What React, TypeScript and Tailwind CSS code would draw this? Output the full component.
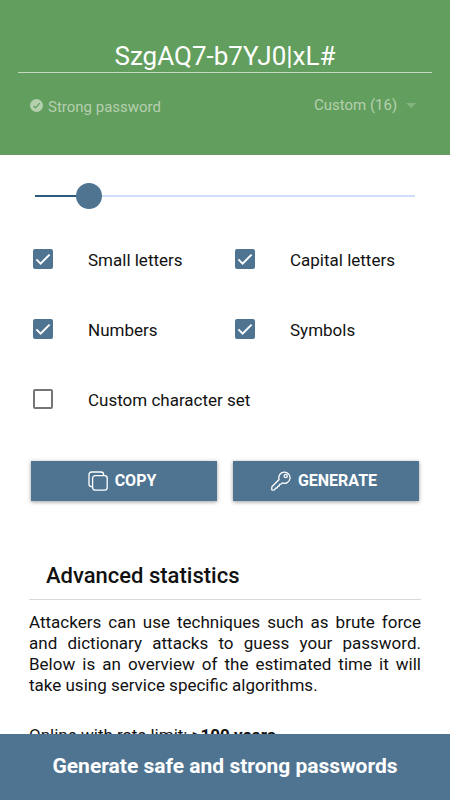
import { useState } from "react";

const MIN_LENGTH = 5;
const MAX_LENGTH = 100;

const charSets = [
  { id: "small", label: "Small letters", checked: true },
  { id: "capital", label: "Capital letters", checked: true },
  { id: "numbers", label: "Numbers", checked: true },
  { id: "symbols", label: "Symbols", checked: true },
  { id: "custom", label: "Custom character set", checked: false },
];

function StrongIcon() {
  return (
    <svg viewBox="0 0 24 24" className="h-[13px] w-[13px]" aria-hidden="true">
      <circle cx="12" cy="12" r="12" fill="#b5d0af" />
      <path d="M6.5 12.8l3.7 3.7 7.8-8.7" fill="none" stroke="#629e5d" strokeWidth="2.2" />
    </svg>
  );
}

function CopyIcon() {
  return (
    <svg
      viewBox="0 0 20 20"
      className="h-5 w-5"
      fill="none"
      stroke="currentColor"
      strokeWidth="1.3"
      strokeLinejoin="round"
      strokeLinecap="round"
      aria-hidden="true"
    >
      <rect x="4.6" y="4.6" width="14.6" height="14.6" rx="2.6" />
      <path d="M15.6 4.4V3.6A2.6 2.6 0 0 0 13 1H3.6A2.6 2.6 0 0 0 1 3.6V13a2.6 2.6 0 0 0 2.6 2.6h.8" />
    </svg>
  );
}

function KeyIcon() {
  return (
    <svg
      viewBox="0 0 20 20"
      className="h-5 w-5"
      fill="none"
      stroke="currentColor"
      strokeWidth="1.3"
      strokeLinejoin="round"
      strokeLinecap="round"
      aria-hidden="true"
    >
      <path d="M8.1 8.5A5.6 5.6 0 1 1 11.300 11.900L10 13.200l-1.500.2-.3 1.600-1.600.3-.3 1.500-1.400.2-1.500 1.800-2.200.3-.5-.5.200-2.900z" />
      <circle cx="14.700" cy="5" r="1.600" />
    </svg>
  );
}

export default function App() {
  const [length, setLength] = useState(16);
  const [sets, setSets] = useState(charSets);

  const percent = ((length - MIN_LENGTH) / (MAX_LENGTH - MIN_LENGTH)) * 100;

  const toggle = (id: string) => {
    setSets(sets.map((s) => (s.id === id ? { ...s, checked: !s.checked } : s)));
  };

  return (
    <div className="flex h-dvh flex-col bg-white font-[Roboto,sans-serif] text-[#111]">
      <main className="min-h-0 flex-1 overflow-y-auto [scrollbar-width:none]">
        <header className="bg-[#629e5d] px-[18px] pt-10 pb-[38px]">
          <input
            type="text"
            aria-label="Password"
            defaultValue="SzgAQ7-b7YJ0|xL#"
            className="block h-[33px] w-full border-b border-[#c3dac0] bg-transparent text-center text-[26px] text-white outline-none"
          />
          <div className="mt-5 flex h-6 items-center justify-between pr-4 pl-3 text-[15px] text-[#b5d0af]">
            <div className="flex items-center gap-[5px]">
              <StrongIcon />
              <span className="pt-1">Strong password</span>
            </div>
            <div className="flex items-center gap-2">
              <select
                aria-label="Password length preset"
                className="appearance-none bg-transparent outline-none"
              >
                <option>Custom (16)</option>
              </select>
              <svg viewBox="0 0 10 5" className="h-[5px] w-[10px]" aria-hidden="true">
                <path d="M0 0h10L5 5z" fill="#85b37f" />
              </svg>
            </div>
          </div>
        </header>

        <div className="px-[23px]">
          <div className="px-3 pt-7">
            <input
              type="range"
              aria-label="Password length"
              min={MIN_LENGTH}
              max={MAX_LENGTH}
              value={length}
              onChange={(e) => setLength(Number(e.target.value))}
              style={{
                backgroundImage: `linear-gradient(to right, #2b5a7d ${percent}%, #cddffa ${percent}%)`,
              }}
              className="block h-[26px] w-full appearance-none bg-[length:100%_2px] bg-center bg-no-repeat outline-none [&::-webkit-slider-thumb]:h-[26px] [&::-webkit-slider-thumb]:w-[26px] [&::-webkit-slider-thumb]:appearance-none [&::-webkit-slider-thumb]:rounded-full [&::-webkit-slider-thumb]:bg-[#4f7492]"
            />
          </div>

          <div className="mt-[15px] grid grid-cols-2">
            {sets.map((set) => (
              <label
                key={set.id}
                className="flex h-[70px] items-center gap-[35px] pl-[10px] text-[17px] whitespace-nowrap"
              >
                <span className="relative h-5 w-5">
                  <input
                    type="checkbox"
                    checked={set.checked}
                    onChange={() => toggle(set.id)}
                    className="peer block h-5 w-5 appearance-none rounded-xs border-2 border-[#757575] checked:border-[#4f7492] checked:bg-[#4f7492]"
                  />
                  <svg
                    viewBox="0 0 20 20"
                    className="pointer-events-none absolute inset-0 hidden h-5 w-5 peer-checked:block"
                    aria-hidden="true"
                  >
                    <path d="M3.400 10.400l4.200 4.200 9-9" fill="none" stroke="#fff" strokeWidth="2" />
                  </svg>
                </span>
                <span className="pt-[3px]">{set.label}</span>
              </label>
            ))}
          </div>

          <div className="mt-[27px] grid grid-cols-2 gap-4 px-2">
            <button className="flex h-10 items-center justify-center gap-[7px] bg-[#4f7492] pr-1 text-base font-bold text-white shadow-[0_1px_4px_rgba(0,0,0,0.4)]">
              <CopyIcon />
              COPY
            </button>
            <button className="flex h-10 items-center justify-center gap-[7px] bg-[#4f7492] pr-1 text-base font-bold text-white shadow-[0_1px_4px_rgba(0,0,0,0.4)]">
              <KeyIcon />
              GENERATE
            </button>
          </div>

          <section className="mt-[50px] px-[6px] text-[17px] leading-[21px]">
            <h2 className="border-b border-[#d9d9d9] px-[17px] pt-[11px] pb-[9px] text-[22px] leading-7 font-medium">
              Advanced statistics
            </h2>
            <p className="mt-3 text-justify">
              Attackers can use techniques such as brute force and dictionary attacks to guess your
              password. Below is an overview of the estimated time it will take using service
              specific algorithms.
            </p>
            <p className="mt-[29px] pb-4">
              Online with rate limit: <b>&gt;100 years</b>
            </p>
          </section>
        </div>
      </main>

      <footer className="flex h-[66px] items-center justify-center bg-[#4f7492] text-[21px] font-bold text-white">
        Generate safe and strong passwords
      </footer>
    </div>
  );
}
